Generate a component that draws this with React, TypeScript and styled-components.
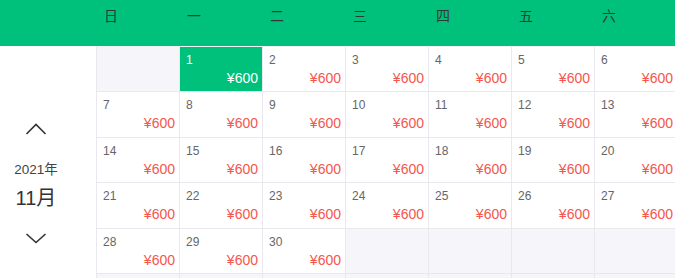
import React from 'react';
import styled, { createGlobalStyle } from 'styled-components';

const GlobalStyle = createGlobalStyle`
  html, body {
    margin: 0;
    padding: 0;
    background: #fff;
    overflow: hidden;
  }
  body {
    font-family: "Liberation Sans", "Noto Sans CJK SC", sans-serif;
  }
`;

const CELL_W = 83;
const SIDE_W = 97;

const Page = styled.div`
  width: 675px;
  height: 278px;
  overflow: hidden;
  display: flex;
  flex-direction: column;
`;

const WeekBar = styled.div`
  height: 46px;
  background: #00c17b;
  display: grid;
  grid-template-columns: ${SIDE_W}px repeat(7, ${CELL_W}px);
  flex-shrink: 0;
`;

const WeekLabel = styled.div`
  padding: 6px 0 0 7px;
  font-family: "Noto Sans CJK SC", sans-serif;
  font-size: 14px;
  line-height: 18px;
  color: #2f3a35;
`;

const Body = styled.div`
  display: flex;
  flex: 1;
  min-height: 0;
`;

const Side = styled.div`
  width: ${SIDE_W}px;
  flex-shrink: 0;
  display: flex;
  flex-direction: column;
  align-items: center;
  padding: 75px 25px 0 0;
  box-sizing: border-box;
  color: #333;
`;

const Arrow = styled.button`
  border: none;
  background: none;
  padding: 0;
  width: 22px;
  height: 14px;
  display: flex;
  align-items: center;
  justify-content: center;
  cursor: pointer;
`;

const Year = styled.div`
  margin-top: 27px;
  font-size: 13.5px;
  line-height: 16px;
  color: #444;
`;

const Month = styled.div`
  margin-top: 8px;
  margin-bottom: 21px;
  font-size: 20px;
  line-height: 24px;
  color: #333;
`;

const Grid = styled.div`
  display: grid;
  grid-template-columns: repeat(7, ${CELL_W}px);
  grid-auto-rows: 45.4px;
  border-left: 1px solid #e8e8ee;
  border-top: 1px solid #f3f3f6;
  margin-left: -1px;
  background: #f6f5f9;
  align-self: flex-start;
`;

const Cell = styled.div<{ $empty?: boolean; $active?: boolean }>`
  box-sizing: border-box;
  border-right: 1px solid #e8e8ee;
  border-bottom: 1px solid #e8e8ee;
  background: ${p => (p.$active ? '#00c17b' : p.$empty ? '#f6f5f9' : '#fff')};
  padding: 6px 4px 0 6px;
  display: flex;
  flex-direction: column;
`;

const Day = styled.div<{ $active?: boolean }>`
  font-size: 12px;
  line-height: 15px;
  color: ${p => (p.$active ? '#fff' : '#666')};
`;

const Price = styled.div<{ $active?: boolean }>`
  margin-top: 2px;
  font-size: 14px;
  line-height: 16px;
  text-align: right;
  color: ${p => (p.$active ? '#fff' : '#f5564d')};
`;

const weekDays = ['日', '一', '二', '三', '四', '五', '六'];

const Chevron = ({ up }: { up?: boolean }) => (
  <svg width="22" height="13" viewBox="0 0 22 13">
    <polyline
      points={up ? '1.5,12 11,2.5 20.5,12' : '1.5,2 11,10.5 20.5,2'}
      fill="none"
      stroke="#333"
      strokeWidth="1.6"
    />
  </svg>
);

const App = () => {
  const cells: (number | null)[] = [null];
  for (let d = 1; d <= 30; d++) cells.push(d);
  while (cells.length < 42) cells.push(null);

  return (
    <Page>
      <GlobalStyle />
      <WeekBar>
        <div />
        {weekDays.map(w => (
          <WeekLabel key={w}>{w}</WeekLabel>
        ))}
      </WeekBar>
      <Body>
        <Side>
          <Arrow>
            <Chevron up />
          </Arrow>
          <Year>2021年</Year>
          <Month>11月</Month>
          <Arrow>
            <Chevron />
          </Arrow>
        </Side>
        <Grid>
          {cells.map((d, i) =>
            d === null ? (
              <Cell key={i} $empty />
            ) : (
              <Cell key={i} $active={d === 1}>
                <Day $active={d === 1}>{d}</Day>
                <Price $active={d === 1}>¥600</Price>
              </Cell>
            )
          )}
        </Grid>
      </Body>
    </Page>
  );
};

export default App;
